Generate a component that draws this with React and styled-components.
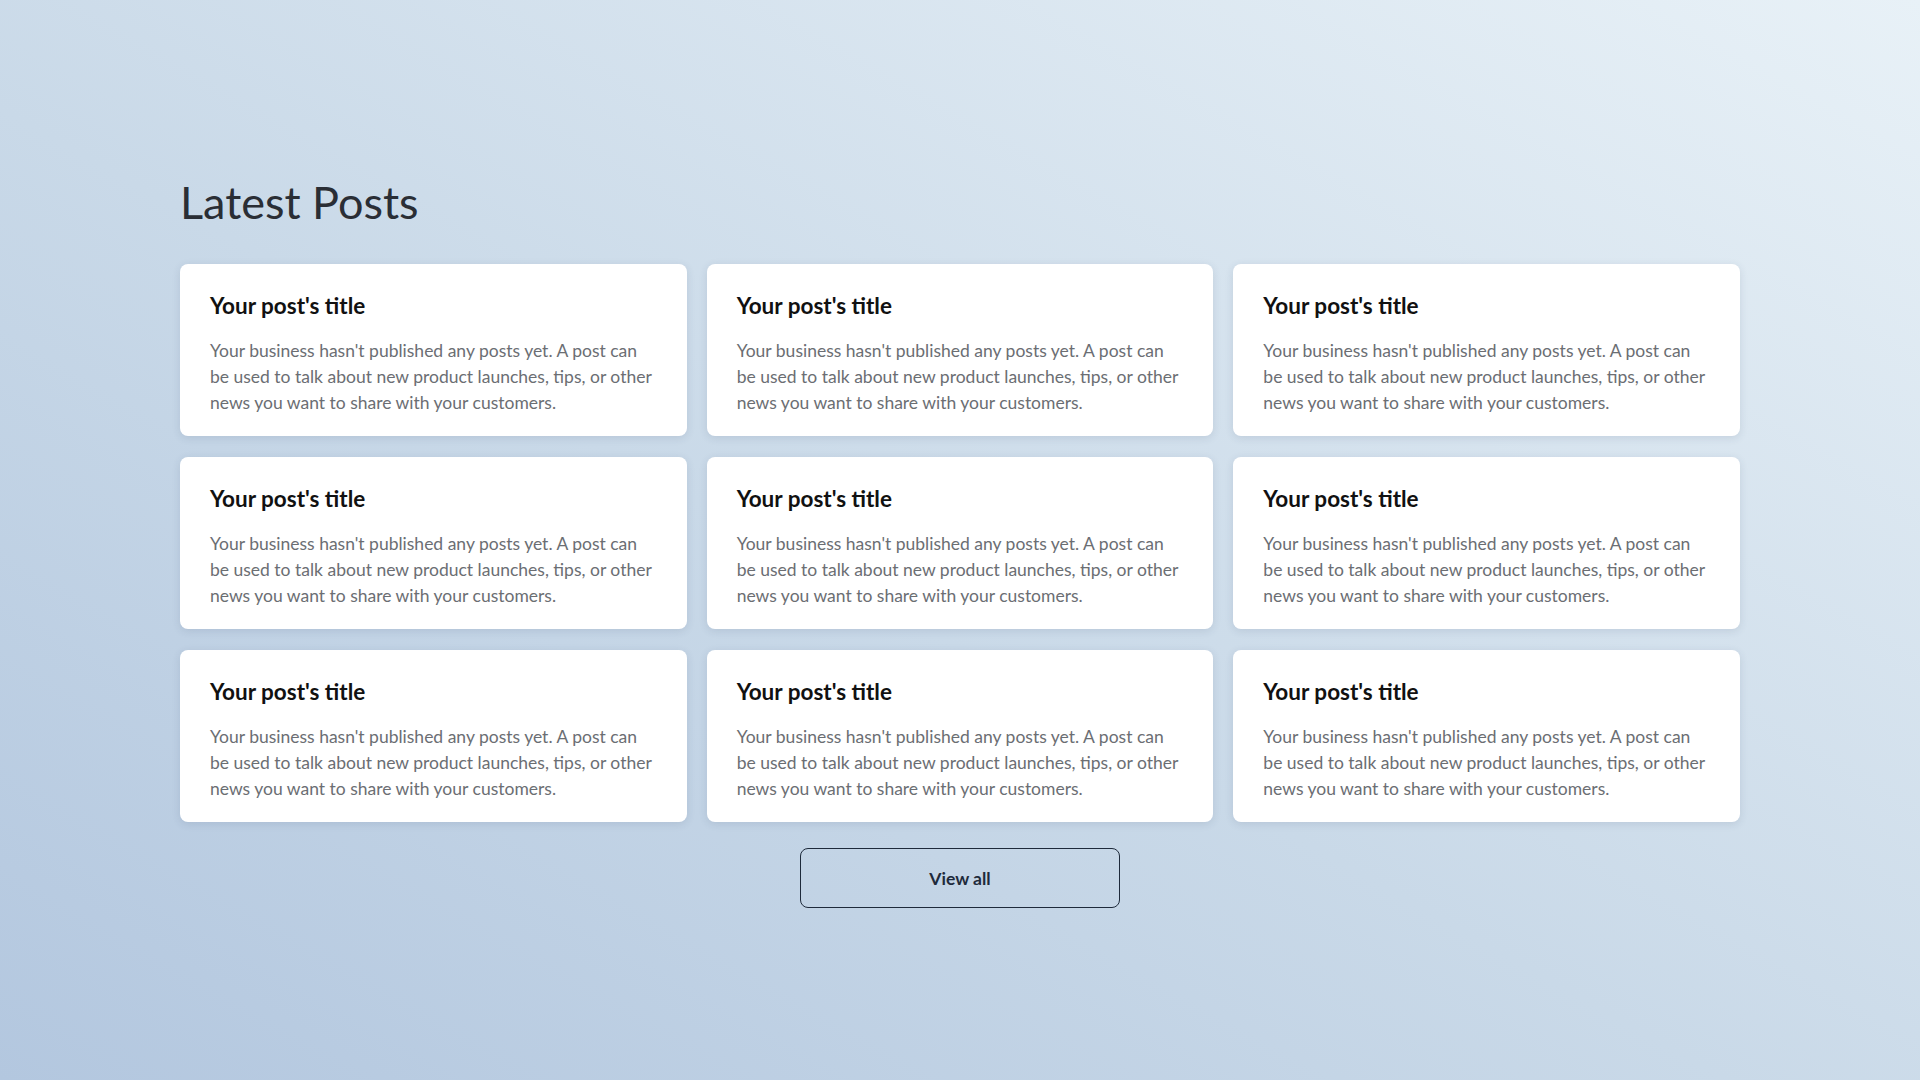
import React from "react";
import styled, { createGlobalStyle } from "styled-components";

const GlobalStyle = createGlobalStyle`
  html, body {
    margin: 0;
    padding: 0;
  }
  body {
    font-family: Lato, "Open Sans", "Liberation Sans", sans-serif;
    background: linear-gradient(to top right, #b3c7df 0%, #c9d9e8 45%, #e8f1f7 100%);
    min-height: 100vh;
  }
  #root {
    min-height: 100vh;
  }
`;

const Page = styled.main`
  min-height: 1080px;
  box-sizing: border-box;
  padding-top: 175px;
`;

const Section = styled.section`
  width: 1560px;
  margin: 0 auto;
  display: flex;
  flex-direction: column;
`;

const Heading = styled.h2`
  margin: 0 0 35px;
  font-size: 45px;
  line-height: 1.2;
  font-weight: 400;
  color: #2a2e35;
`;

const Grid = styled.div`
  display: grid;
  grid-template-columns: repeat(3, 1fr);
  column-gap: 20px;
  row-gap: 21px;
`;

const Card = styled.article`
  background: #ffffff;
  border-radius: 8px;
  box-shadow: 0 2px 8px rgba(40, 60, 90, 0.12);
  padding: 28px 30px 0;
  box-sizing: border-box;
  height: 172px;
`;

const CardTitle = styled.h3`
  margin: 0 0 19px;
  font-size: 22.5px;
  line-height: 1.2;
  font-weight: 700;
  color: #111111;
`;

const CardText = styled.p`
  margin: 0;
  font-size: 17.5px;
  line-height: 25.75px;
  color: #6b6e73;
`;

const Footer = styled.div`
  display: flex;
  justify-content: center;
  margin-top: 26px;
`;

const ViewAll = styled.button`
  width: 320px;
  height: 60px;
  border: 1px solid #1e2a3b;
  border-radius: 8px;
  background: transparent;
  font-family: inherit;
  font-size: 17.5px;
  font-weight: 700;
  color: #1e2a3b;
  cursor: pointer;
`;

const posts = Array.from({ length: 9 }, (_, i) => ({
  id: i,
  title: "Your post's title",
  text: "Your business hasn't published any posts yet. A post can be used to talk about new product launches, tips, or other news you want to share with your customers.",
}));

export default function App() {
  return (
    <>
      <GlobalStyle />
      <Page>
        <Section>
          <Heading>Latest Posts</Heading>
          <Grid>
            {posts.map((p) => (
              <Card key={p.id}>
                <CardTitle>{p.title}</CardTitle>
                <CardText>{p.text}</CardText>
              </Card>
            ))}
          </Grid>
          <Footer>
            <ViewAll>View all</ViewAll>
          </Footer>
        </Section>
      </Page>
    </>
  );
}
